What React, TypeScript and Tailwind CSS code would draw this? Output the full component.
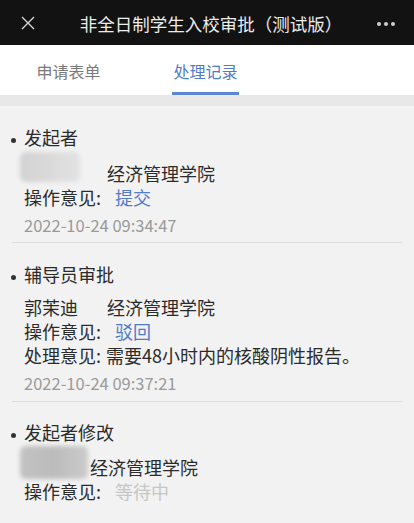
import React from "react";

const font = { fontFamily: '"Noto Sans CJK SC", "Noto Sans", sans-serif' };

function Blur({ className }: { className: string }) {
  return (
    <div className={`rounded-md blur-[2px] ${className}`} />
  );
}

function Title({ text }: { text: string }) {
  return (
    <div className="flex items-start">
      <div className="ml-[11px] mr-[8px] mt-[13px] h-[5px] w-[5px] rounded-full bg-[#333]" />
      <div className="text-[18px] leading-[24px] text-[#2b2b2b]">{text}</div>
    </div>
  );
}

function Line({ label, value, valueClass }: { label: string; value: string; valueClass: string }) {
  return (
    <div className="flex pl-[24px] text-[18px] leading-[24px] text-[#2b2b2b]">
      <span>{label}</span>
      <span className={valueClass}>{value}</span>
    </div>
  );
}

function Stamp({ time }: { time: string }) {
  return (
    <div className="mt-[4px] pl-[24px] text-[16.5px] leading-[24px] text-[#9a9a9a]">{time}</div>
  );
}

export default function App() {
  return (
    <div className="h-[523px] w-[414px] overflow-hidden bg-[#f2f2f2]" style={font}>
      <div className="relative flex h-[45px] items-center bg-[#121212]">
        <svg className="absolute left-[21px] top-[16px]" width="14" height="14" viewBox="0 0 14 14">
          <path d="M1 1L13 13M13 1L1 13" stroke="#d6d6d6" strokeWidth="1.4" />
        </svg>
        <div className="mt-[2px] w-full pl-[8px] text-center text-[17.5px] leading-[24px] text-[#ececec]">
          非全日制学生入校审批（测试版）
        </div>
        <div className="absolute left-[377px] top-[22px] flex gap-[3px]">
          <div className="h-[4px] w-[4px] rounded-full bg-[#cfcfcf]" />
          <div className="h-[4px] w-[4px] rounded-full bg-[#cfcfcf]" />
          <div className="h-[4px] w-[4px] rounded-full bg-[#cfcfcf]" />
        </div>
      </div>

      <div className="flex h-[50px] bg-white">
        <div className="flex w-[137px] flex-col items-center">
          <div className="mt-[14px] text-[16px] leading-[24px] text-[#7a7a7a]">申请表单</div>
        </div>
        <div className="flex w-[137px] flex-col items-center">
          <div className="mt-[14px] text-[16px] leading-[24px] text-[#4f7bc9]">处理记录</div>
          <div className="mt-[9px] h-[3px] w-[67px] bg-[#5b86d1]" />
        </div>
      </div>
      <div className="h-[11px] bg-[#e8e8e8]" />

      <div className="pt-[19px]">
        <Title text="发起者" />
        <div className="flex">
          <Blur className="ml-[20px] mt-[3px] h-[30px] w-[60px] bg-gradient-to-r from-[#d2d2d2] via-[#dadada] to-[#e2e2e2]" />
          <div className="ml-[27px] mt-[12px] text-[18px] leading-[24px] text-[#2b2b2b]">经济管理学院</div>
        </div>
        <Line label="操作意见:" value="提交" valueClass="ml-[14px] text-[#4f7bc9]" />
        <Stamp time="2022-10-24 09:34:47" />
        <div className="mx-[12px] mt-[5px] h-px bg-[#dcdcdc]" />
      </div>

      <div className="pt-[19px]">
        <Title text="辅导员审批" />
        <div className="mt-[9px] flex pl-[24px] text-[18px] leading-[24px] text-[#2b2b2b]">
          <span className="w-[83px]">郭茉迪</span>
          <span>经济管理学院</span>
        </div>
        <Line label="操作意见:" value="驳回" valueClass="ml-[14px] text-[#4f7bc9]" />
        <Line label="处理意见:" value="需要48小时内的核酸阴性报告。" valueClass="ml-[5px]" />
        <Stamp time="2022-10-24 09:37:21" />
        <div className="mx-[12px] mt-[6px] h-px bg-[#dcdcdc]" />
      </div>

      <div className="pt-[18px]">
        <Title text="发起者修改" />
        <div className="flex">
          <Blur className="ml-[20px] mt-[2px] h-[33px] w-[68px] bg-gradient-to-r from-[#c2c2c2] via-[#bcbcbc] to-[#cacaca]" />
          <div className="ml-[2px] mt-[11px] text-[18px] leading-[24px] text-[#2b2b2b]">经济管理学院</div>
        </div>
        <Line label="操作意见:" value="等待中" valueClass="ml-[14px] text-[#c6c6c6]" />
      </div>
    </div>
  );
}
